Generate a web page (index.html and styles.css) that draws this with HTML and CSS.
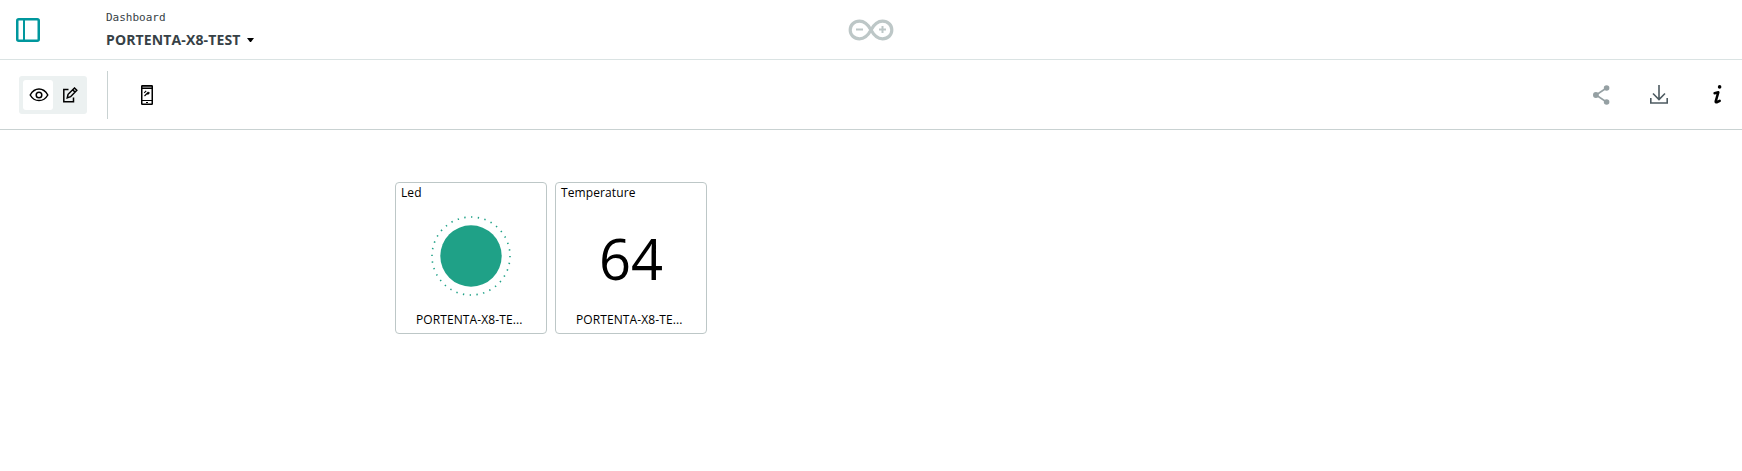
FILE: index.html
```html
<!DOCTYPE html>
<html lang="en">
<head>
<meta charset="utf-8">
<title>Dashboard</title>
<link rel="stylesheet" href="styles.css">
</head>
<body>
<header class="header">
  <div class="header-left">
    <svg class="panel-icon" width="24" height="24" viewBox="0 0 24 24"><rect x="1.25" y="1.25" width="21.5" height="21.5" rx="1.5"/><path d="M8 1v22"/></svg>
    <div class="heading">
      <div class="crumb">Dashboard</div>
      <div class="title"><span>PORTENTA-X8-TEST</span><svg width="7" height="4" viewBox="0 0 7 4"><path d="M0 0h7L4 4H3z"/></svg></div>
    </div>
  </div>
  <svg class="logo" width="46" height="22" viewBox="0 0 46 22"><path d="M23 11C20 5.5 16.500 2.200 11.500 2.200C6 2.200 2.200 6 2.200 11s3.800 8.800 9.300 8.800C16.500 19.800 20 16.500 23 11S29.500 2.200 34.500 2.200C40 2.200 43.800 6 43.800 11s-3.800 8.800-9.300 8.800C29.500 19.800 26 16.500 23 11z"/><path class="sign" d="M8 10.500h7M31 10.500h7M34.500 7v7"/></svg>
  <div class="header-right"></div>
</header>
<nav class="toolbar">
  <div class="toggle">
    <span class="mode active"><svg width="20" height="14" viewBox="0 0 20 14"><path d="M1.200 7C3.500 3 6.500 1.100 10 1.100S16.500 3 18.800 7C16.500 11 13.500 12.600 10 12.600S3.500 11 1.200 7z"/><circle cx="10" cy="7" r="2.800"/></svg></span>
    <span class="mode"><svg width="16" height="16" viewBox="0 0 16 16"><path d="M6.500 2.500H1.800v12.300H11.500V10.500"/><path d="M5.200 10.900l.9-3.600 6.400-6.300 2.300 2.200-6.200 6.500zM10.800 2.900l2.100 2.100"/></svg></span>
  </div>
  <span class="divider"></span>
  <svg class="phone" width="12" height="20" viewBox="0 0 12 20"><path class="screen-bar" d="M1 1h10v2H1z"/><rect x=".75" y=".75" width="10.500" height="18.500" rx=".5"/><path class="thin" d="M1 3.500h10M1 15.500h10M5 17.500h2"/><path class="thin" d="M3.200 7.800l2-2M3.500 11l4-4M6.500 9.500l2-2"/></svg>
  <div class="actions">
    <svg class="share" width="17" height="20" viewBox="0 0 17 20"><path d="M13.500 3L3 10l10.500 7"/><circle cx="13.600" cy="3" r="2.800"/><circle cx="2.900" cy="10" r="2.900"/><circle cx="13.600" cy="17" r="2.800"/></svg>
    <svg class="download" width="18" height="19" viewBox="0 0 18 19"><path d="M9 0v14.500M3 8.500l6 6 6-6M.8 13v5h16.400v-5"/></svg>
    <svg class="info" width="9" height="19" viewBox="0 0 9 19"><circle cx="6.600" cy="1.900" r="1.800"/><path d="M1.600 8.200L5.300 7.300 2.700 16.400Q2.500 17.700 4 17.200L6.700 15.800"/></svg>
  </div>
</nav>
<main class="board">
  <section class="card">
    <h2>Led</h2>
    <div class="value"><svg width="82" height="82" viewBox="0 0 82 82"><circle class="ring" cx="41" cy="41" r="39" pathLength="360"/><circle class="lamp" cx="41" cy="41" r="30.700"/></svg></div>
    <p>PORTENTA-X8-TE...</p>
  </section>
  <section class="card">
    <h2>Temperature</h2>
    <div class="value number">64</div>
    <p>PORTENTA-X8-TE...</p>
  </section>
</main>
</body>
</html>
```
FILE: styles.css
```css
* { box-sizing: border-box; }
body {
  margin: 0;
  height: 471px;
  overflow: hidden;
  background: #fff;
  color: #000;
  font-family: "Open Sans", sans-serif;
}
svg { display: block; fill: none; flex: none; }
.header {
  display: grid;
  grid-template-columns: 1fr 46px 1fr;
  align-items: center;
  height: 60px;
  border-bottom: 1px solid #dae3e3;
}
.header-left { display: flex; align-items: center; padding-left: 16px; gap: 66px; }
.panel-icon { stroke: #00979d; stroke-width: 2.5; }
.panel-icon path { stroke-width: 2; }
.crumb {
  font: 11px/14px "DejaVu Sans Mono", monospace;
  color: #374146;
}
.title {
  display: flex;
  align-items: center;
  gap: 7px;
  margin-top: 5px;
  margin-bottom: -1px;
  font-size: 14px;
  line-height: 20px;
  font-weight: 700;
  letter-spacing: .13px;
  color: #374146;
}
.title svg { fill: #000; }
.logo { stroke: #bdc7c7; stroke-width: 3.2; }
.logo .sign { stroke-width: 2; }
.toolbar {
  display: flex;
  align-items: center;
  height: 70px;
  padding: 0 20px 0 19px;
  border-bottom: 1px solid #c9d2d2;
}
.toggle {
  display: flex;
  align-items: center;
  width: 68px;
  height: 38px;
  padding: 4px 0 4px 4px;
  border-radius: 3px;
  background: #ecf1f1;
}
.mode { display: grid; place-items: center; width: 30px; height: 30px; border-radius: 3px; }
.mode svg { stroke: #000; stroke-width: 1.5; }
.mode.active { background: #fff; }
.mode.active svg { margin-left: 2px; }
.mode:last-child { width: 34px; }
.divider { width: 1px; height: 48px; margin: 0 33px 0 20px; background: #c9d2d2; }
.phone { stroke: #000; stroke-width: 1.5; }
.phone .screen-bar { fill: #777; stroke: none; }
.phone .thin { stroke-width: 1.1; }
.actions { display: flex; align-items: center; margin-left: auto; }
.share { stroke: #95a0a3; stroke-width: 1.6; margin-right: 40px; }
.share circle { fill: #95a0a3; stroke: none; }
.download { stroke: #4e5b61; stroke-width: 1.6; margin-right: 45px; }
.info { stroke: #000; stroke-width: 2.5; stroke-linecap: round; stroke-linejoin: round; }
.info circle { fill: #000; stroke: none; }
.board { display: flex; gap: 8px; padding: 52px 0 0 395px; }
.card {
  display: flex;
  flex-direction: column;
  width: 152px;
  height: 152px;
  border: 1px solid #bdc7c7;
  border-radius: 4px;
}
.card h2 { margin: 1px 0 0 5px; font-size: 12px; line-height: 18px; font-weight: 400; letter-spacing: .1px; }
.card p { margin: 0 0 4px 20px; font-size: 12px; line-height: 18px; letter-spacing: .1px; white-space: nowrap; }
.value { flex: 1; display: grid; place-items: center; padding-bottom: 2px; }
.ring { stroke: #1fa187; stroke-width: 1.6; stroke-dasharray: 2 8; }
.lamp { fill: #1fa187; }
.number { font-size: 56px; line-height: 76px; padding: 2px 0 0; }
```
